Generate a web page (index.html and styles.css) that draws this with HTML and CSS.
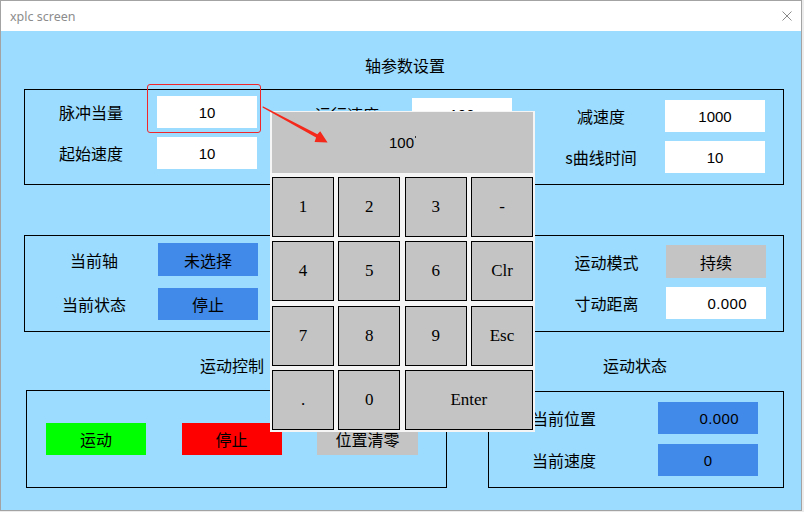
FILE: index.html
```html
<!DOCTYPE html>
<html lang="zh-CN">
<head>
<meta charset="utf-8">
<title>xplc screen</title>
<link rel="stylesheet" href="styles.css">
</head>
<body>
<div class="window">
  <div class="titlebar">
    <span class="title">xplc screen</span>
    <svg class="close" width="10" height="10" viewBox="0 0 10 10"><path d="M0.5 0.5 L9.5 9.5 M9.5 0.5 L0.5 9.5" stroke="#8a8a8a" stroke-width="1" fill="none"/></svg>
  </div>
  <div class="content">
    <div class="sec-title main-title">轴参数设置</div>
    <div class="box box1">
      <div class="fields f1">
        <span class="lbl">脉冲当量</span><span class="val white">10</span>
        <span class="lbl">起始速度</span><span class="val white">10</span>
      </div>
      <div class="fields f2">
        <span class="lbl">运行速度</span><span class="val white">100</span>
        <span class="lbl">加速度</span><span class="val white">1000</span>
      </div>
      <div class="fields f3">
        <span class="lbl">减速度</span><span class="val white">1000</span>
        <span class="lbl">s曲线时间</span><span class="val white">10</span>
      </div>
    </div>
    <div class="box box2">
      <div class="fields f4">
        <span class="lbl">当前轴</span><span class="val blue cjk">未选择</span>
        <span class="lbl">当前状态</span><span class="val blue cjk">停止</span>
      </div>
      <div class="fields f5">
        <span class="lbl">运动模式</span><span class="val gray cjk">持续</span>
        <span class="lbl">寸动距离</span><span class="val white r">0.000</span>
      </div>
    </div>
    <div class="bottom">
      <div class="col col-left">
        <div class="sec-title col-title t-left">运动控制</div>
        <div class="box box3 ctrl">
          <span class="btn green">运动</span>
          <span class="btn red">停止</span>
          <span class="btn gray wide">位置清零</span>
        </div>
      </div>
      <div class="col col-right">
        <div class="sec-title col-title t-right">运动状态</div>
        <div class="box box3 status">
          <span class="lbl">当前位置</span><span class="val blue r">0.000</span>
          <span class="lbl">当前速度</span><span class="val blue">0</span>
        </div>
      </div>
    </div>

    <div class="hl"></div>

    <div class="keypad">
      <div class="display">100<span class="caret"></span></div>
      <div class="keys">
        <span class="key">1</span><span class="key">2</span><span class="key">3</span><span class="key">-</span>
        <span class="key">4</span><span class="key">5</span><span class="key">6</span><span class="key">Clr</span>
        <span class="key">7</span><span class="key">8</span><span class="key">9</span><span class="key">Esc</span>
        <span class="key">.</span><span class="key">0</span><span class="key enter">Enter</span>
      </div>
    </div>

    <svg class="arrow" width="70" height="42" viewBox="261 103 70 42">
      <polygon points="262.8,106.3 317.4,134.2 320.2,131.2 327.6,142.4 314.6,141.9 316.1,137.4 262.5,107.6" fill="#f5281c"/>
    </svg>
  </div>
</div>
</body>
</html>
```

FILE: styles.css
```css
* { box-sizing: border-box; }
html, body { margin: 0; padding: 0; }
body {
  width: 804px;
  height: 512px;
  overflow: hidden;
  background: #ececec;
  font-family: "Noto Sans CJK SC", "Noto Sans", sans-serif;
  color: #000;
}
.window {
  width: 802px;
  height: 511px;
  border: 1px solid #a3a3a3;
  background: #fff;
  display: flex;
  flex-direction: column;
}
.titlebar {
  height: 30px;
  flex: none;
  display: flex;
  align-items: center;
  justify-content: space-between;
  padding: 0 9px 0 9px;
  background: #fff;
}
.title {
  font-family: "Noto Sans", sans-serif;
  font-size: 12.5px;
  color: #8c8c8c;
}
.close { display: block; }
.content {
  flex: 1;
  position: relative;
  background: #9cdcfe;
}
.sec-title {
  font-size: 16px;
  line-height: 20px;
  height: 20px;
  text-align: center;
}
.main-title {
  margin-top: 24px;
  padding-left: 8px;
}
.box { border: 1px solid #000; }
.box1 {
  margin: 14px 0 0 23px;
  width: 760px;
  height: 96px;
  display: flex;
  gap: 25px;
}
.fields {
  display: grid;
  align-content: start;
}
.f1, .f2, .f3 { grid-auto-rows: 32px; row-gap: 9px; }
.f1 { grid-template-columns: 132px 100px; padding-top: 6px; }
.f2 { grid-template-columns: 130px 100px; padding-top: 8px; }
.f3 { grid-template-columns: 128px 100px; padding-top: 10px; }
.box2 {
  margin: 50px 0 0 23px;
  width: 760px;
  height: 97px;
  display: flex;
  justify-content: space-between;
}
.f4 {
  grid-template-columns: 128px 100px;
  grid-template-rows: 33px 32px;
  row-gap: 12px;
  margin-left: 5px;
  padding-top: 7px;
}
.f5 {
  grid-template-columns: 119px 100px;
  grid-template-rows: 33px 32px;
  row-gap: 9px;
  margin-right: 17px;
  padding-top: 9px;
}
.lbl {
  display: flex;
  align-items: center;
  justify-content: center;
  font-size: 16px;
  white-space: nowrap;
}
.val {
  display: flex;
  align-items: center;
  justify-content: center;
  font-family: "Liberation Sans", sans-serif;
  font-size: 15px;
}
.val.cjk { font-family: "Noto Sans CJK SC", sans-serif; font-size: 16px; }
.val.r { justify-content: flex-end; padding-right: 19px; letter-spacing: 0.4px; }
.white { background: #fff; }
.blue { background: #428ae9; }
.gray { background: #c4c4c4; }
.green { background: #00ff00; }
.red { background: #ff0000; }
.bottom {
  display: flex;
  margin-left: 25px;
  gap: 41px;
}
.col-left { width: 421px; }
.col-right { width: 296px; }
.col-title { margin-top: 23px; }
.t-left { margin-bottom: 15px; padding-right: 9px; }
.t-right { margin-bottom: 16px; padding-right: 2px; }
.ctrl {
  height: 98px;
  display: flex;
  align-items: flex-start;
  gap: 35.5px;
  padding: 32px 0 0 19px;
}
.btn {
  width: 100px;
  height: 32px;
  display: flex;
  align-items: center;
  justify-content: center;
  font-size: 16px;
}
.btn.wide { width: 101px; }
.status {
  height: 97px;
  display: grid;
  grid-template-columns: 150px 100px;
  grid-template-rows: 32px 32px;
  column-gap: 19px;
  row-gap: 10px;
  padding-top: 10px;
  align-content: start;
}
.hl {
  position: absolute;
  left: 146px;
  top: 53px;
  width: 114px;
  height: 49px;
  border: 1.5px solid #f0262a;
  border-radius: 3px;
}
.keypad {
  position: absolute;
  left: 269px;
  top: 80px;
  width: 265px;
  height: 321px;
  background: #f5f5f5;
  padding: 1px 2px 2px 2px;
}
.display {
  height: 61px;
  background: #c4c4c4;
  display: flex;
  align-items: center;
  justify-content: center;
  font-family: "Liberation Sans", sans-serif;
  font-size: 15px;
}
.caret {
  width: 1px;
  height: 2px;
  background: #333;
  align-self: flex-start;
  margin: 24px 0 0 1px;
}
.keys {
  margin-top: 4px;
  height: 253px;
  display: grid;
  grid-template-columns: repeat(4, 1fr);
  grid-template-rows: repeat(4, 1fr);
  gap: 4.33px;
}
.key {
  background: #c4c4c4;
  border: 1px solid #000;
  display: flex;
  align-items: center;
  justify-content: center;
  font-family: "Liberation Serif", serif;
  font-size: 17px;
}
.key.enter { grid-column: span 2; }
.arrow {
  position: absolute;
  left: 260px;
  top: 72px;
}
```
